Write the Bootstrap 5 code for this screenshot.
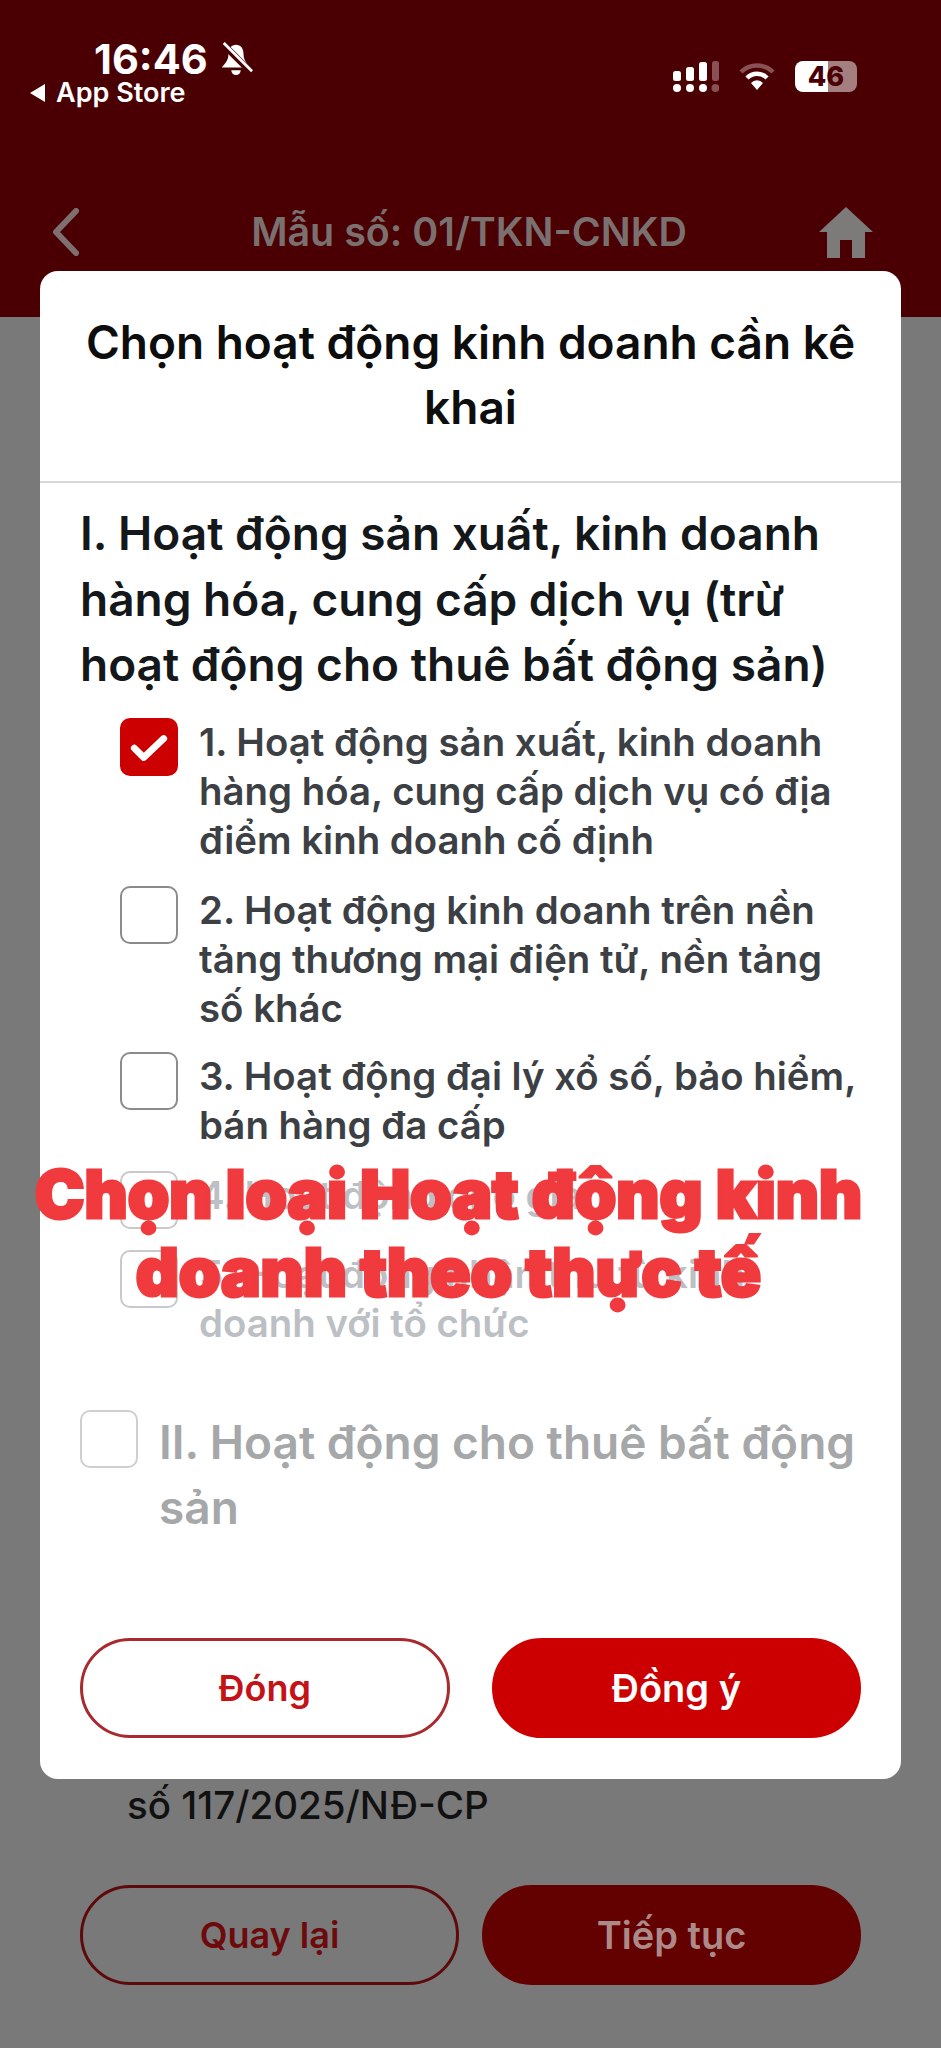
<!DOCTYPE html>
<html lang="vi">
<head>
<meta charset="utf-8">
<title>Chọn hoạt động kinh doanh</title>
<link href="https://cdn.jsdelivr.net/npm/bootstrap@5.3.0/dist/css/bootstrap.min.css" rel="stylesheet">
<style>
html,body{margin:0;background:#797979;}
body{font-family:Inter,"Noto Sans",sans-serif;}
.screen{position:relative;width:941px;height:2048px;overflow:hidden;background:#797979;}
.app-head{height:317px;background:#4a0003;padding:40px 84px 0 30px;}
.status-left{width:240px;color:#fff;}
.clock-row{height:38px;padding-left:64px;font-size:41.5px;line-height:38px;font-weight:700;gap:11px;}
.store-row{height:30px;font-size:27px;line-height:30px;font-weight:600;gap:11px;}
.store-tri{width:0;height:0;border-style:solid;border-width:9px 15px 9px 0;border-color:transparent #fff transparent transparent;}
.status-right{padding-top:21px;gap:20px;height:68px;}
.batt{width:62px;height:31px;border-radius:8px;background:linear-gradient(90deg,#fff 0 53%,#a57e80 53% 100%);color:#4a0003;font-size:27px;line-height:31px;font-weight:800;text-align:center;}
.nav-row{margin-top:97px;height:54px;margin-left:22px;margin-right:-17px;}
.nav-title{color:#7b7070;font-size:39.4px;font-weight:600;line-height:54px;margin-left:40px;}
.app-body{padding:0 80px;}
.legal-note{margin-top:1467px;padding-left:47px;font-size:38.5px;font-weight:500;line-height:42px;color:#111;}
.legacy-btns{margin-top:59px;gap:23px;}
.pill-btn{height:100px;border-radius:50px;font-size:36px;font-weight:600;line-height:1;border-width:3px;display:flex;align-items:center;justify-content:center;}
.btn-back{flex:0 0 379px;background:transparent;border:3px solid #5c0a0c;color:#6d0a0c;}
.btn-next{flex:1 1 auto;background:#630000;border:3px solid #630000;color:#ad8a8a;font-size:38px;}
.dialog-box{position:absolute;left:40px;top:271px;width:861px;height:1508px;background:#fff;border:0;border-radius:18px;}
.dialog-top{padding:39px 40px 41px;border-bottom:2px solid #d9d9d9;background:transparent;text-align:center;font-size:46px;line-height:65px;font-weight:600;color:#0d0d0d;}
.dialog-main{padding:18px 40px 0;}
.sec-title{font-size:46px;line-height:65.5px;font-weight:600;color:#15181b;margin:0 0 20px;}
.opt-list{padding-left:40px;}
.opt-row{gap:21px;margin-bottom:21px;min-height:57px;}
.opt-row:nth-child(2){margin-bottom:19px;}
.opt-box.form-check-input{flex:0 0 58px;width:58px;height:58px;margin:0;border:2.5px solid #8b8b8b;border-radius:10px;background-color:#fff;opacity:1;}
.opt-box.form-check-input:checked{background-color:#cc0000;border-color:#cc0000;background-size:42px 42px;background-image:url("data:image/svg+xml,%3Csvg xmlns='http://www.w3.org/2000/svg' viewBox='0 0 40 40'%3E%3Cpath d='M6 21l9 9 19-18' fill='none' stroke='%23fff' stroke-width='6.5' stroke-linecap='round' stroke-linejoin='round'/%3E%3C/svg%3E");}
.opt-text{font-size:38.4px;line-height:49px;font-weight:600;color:#3c3f44;}
.opt-off .opt-text{color:#bcbfc3;}
.opt-off .opt-box.form-check-input{border-color:#c9c9c9;}
.sec-two{margin-top:62px;gap:21px;}
.sec-two .opt-box.form-check-input{border-color:#cfcfcf;}
.sec-two-text{font-size:46px;line-height:65px;font-weight:600;color:#a5a7a9;}
.dialog-foot{position:absolute;left:40px;right:40px;bottom:41px;gap:42px;background:transparent;}
.dialog-foot .pill-btn{flex:1 1 0;}
.btn-close-it{background:#fff;border:3px solid #a92a2e;color:#c41216;}
.btn-ok-it{background:#cc0000;border:3px solid #cc0000;color:#fff;font-size:38px;}
.over-caption{position:absolute;left:0;width:897px;top:1155px;text-align:center;font-size:66.5px;line-height:78px;font-weight:900;color:#f03a3d;-webkit-text-stroke:3px #f03a3d;}
</style>
</head>
<body>
<div class="screen">
  <header class="app-head">
    <div class="d-flex justify-content-between">
      <div class="status-left">
        <div class="clock-row d-flex align-items-center">16:46
          <svg width="34" height="34" viewBox="0 0 36 36"><path d="M18 3c-5 0-8 4-8 10 0 6-3 9-7 14h30c-4-5-7-8-7-14 0-6-3-10-8-10z" fill="#fff"/><path d="M13 30a5 5 0 0 0 10 0z" fill="#fff"/><path d="M4 2l30 30" stroke="#4a0003" stroke-width="7"/><path d="M5 1l30 30" stroke="#fff" stroke-width="3"/></svg>
        </div>
        <div class="store-row d-flex align-items-center"><span class="store-tri"></span>App Store</div>
      </div>
      <div class="status-right d-flex align-items-start">
        <svg width="46" height="32" viewBox="0 0 46 32"><g fill="#fff"><rect x="0" y="10" width="8" height="10" rx="2.5"/><rect x="13" y="6" width="8" height="14" rx="2.5"/><rect x="26" y="1" width="8" height="19" rx="2.5"/><circle cx="4" cy="27" r="4"/><circle cx="17" cy="27" r="4"/><circle cx="30" cy="27" r="4"/></g><g fill="#8a5154"><rect x="39" y="0" width="7" height="20" rx="2.5"/><circle cx="42.5" cy="27" r="4"/></g></svg>
        <svg width="36" height="30" viewBox="0 0 36 30"><path d="M2 11a23 23 0 0 1 32 0" fill="none" stroke="#8a5154" stroke-width="4.5"/><path d="M8 17a14 14 0 0 1 20 0" fill="none" stroke="#fff" stroke-width="4.5"/><path d="M18 29l-6-7a8 8 0 0 1 12 0z" fill="#fff"/></svg>
        <div class="batt">46</div>
      </div>
    </div>
    <nav class="nav-row d-flex align-items-center justify-content-between">
      <svg width="28" height="48" viewBox="0 0 28 48"><path d="M24 3L4 24l20 21" fill="none" stroke="#7f7070" stroke-width="6" stroke-linecap="round" stroke-linejoin="round"/></svg>
      <div class="nav-title">Mẫu số: 01/TKN-CNKD</div>
      <svg width="56" height="52" viewBox="0 0 56 52"><path d="M28 1L1 26h8v26h13V34h12v18h13V26h8z" fill="#7d7a7a"/></svg>
    </nav>
  </header>
  <main class="app-body">
    <div class="legal-note">số 117/2025/NĐ-CP</div>
    <div class="legacy-btns d-flex">
      <button type="button" class="btn pill-btn btn-back">Quay lại</button>
      <button type="button" class="btn pill-btn btn-next">Tiếp tục</button>
    </div>
  </main>

  <section class="card dialog-box">
    <div class="card-header dialog-top">Chọn hoạt động kinh doanh cần kê khai</div>
    <div class="dialog-main">
      <h2 class="sec-title">I. Hoạt động sản xuất, kinh doanh hàng hóa, cung cấp dịch vụ (trừ hoạt động cho thuê bất động sản)</h2>
      <div class="opt-list">
        <div class="opt-row d-flex align-items-start"><input class="form-check-input opt-box" type="checkbox" checked aria-label="1"><div class="opt-text">1. Hoạt động sản xuất, kinh doanh hàng hóa, cung cấp dịch vụ có địa điểm kinh doanh cố định</div></div>
        <div class="opt-row d-flex align-items-start"><input class="form-check-input opt-box" type="checkbox" aria-label="2"><div class="opt-text">2. Hoạt động kinh doanh trên nền tảng thương mại điện tử, nền tảng số khác</div></div>
        <div class="opt-row d-flex align-items-start"><input class="form-check-input opt-box" type="checkbox" aria-label="3"><div class="opt-text">3. Hoạt động đại lý xổ số, bảo hiểm, bán hàng đa cấp</div></div>
        <div class="opt-row opt-off d-flex align-items-start"><input class="form-check-input opt-box" type="checkbox" aria-label="4"><div class="opt-text">4. Hoạt động cho gia</div></div>
        <div class="opt-row opt-off d-flex align-items-start"><input class="form-check-input opt-box" type="checkbox" aria-label="5"><div class="opt-text">5. Hoạt động nhận thu từ kinh doanh với tổ chức</div></div>
      </div>
      <div class="sec-two d-flex align-items-start"><input class="form-check-input opt-box" type="checkbox" aria-label="II"><div class="sec-two-text">II. Hoạt động cho thuê bất động sản</div></div>
    </div>
    <div class="card-footer dialog-foot border-0 p-0 d-flex">
      <button type="button" class="btn pill-btn btn-close-it">Đóng</button>
      <button type="button" class="btn pill-btn btn-ok-it">Đồng ý</button>
    </div>
  </section>

  <div class="over-caption">Chọn loại Hoạt động kinh<br>doanh theo thực tế</div>
</div>
<script src="https://cdn.jsdelivr.net/npm/bootstrap@5.3.0/dist/js/bootstrap.bundle.min.js"></script>
</body>
</html>
